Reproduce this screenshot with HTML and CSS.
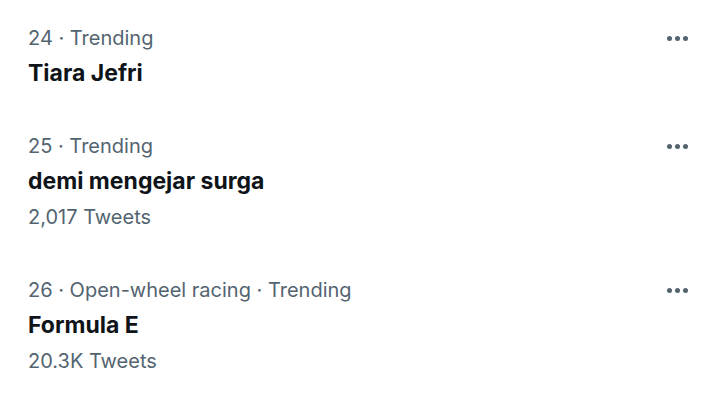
FILE: index.html
```html
<!DOCTYPE html>
<html>
<head>
<meta charset="utf-8">
<link rel="stylesheet" href="styles.css">
</head>
<body>
<div class="list">
  <div class="trend">
    <div class="body">
      <div class="meta">24 · Trending</div>
      <div class="title">Tiara Jefri</div>
    </div>
    <div class="more"><span></span><span></span><span></span></div>
  </div>
  <div class="trend">
    <div class="body">
      <div class="meta">25 · Trending</div>
      <div class="title">demi mengejar surga</div>
      <div class="count">2,017 Tweets</div>
    </div>
    <div class="more"><span></span><span></span><span></span></div>
  </div>
  <div class="trend">
    <div class="body">
      <div class="meta">26 · Open-wheel racing · Trending</div>
      <div class="title">Formula E</div>
      <div class="count">20.3K Tweets</div>
    </div>
    <div class="more"><span></span><span></span><span></span></div>
  </div>
</div>
</body>
</html>
```
FILE: styles.css
```css
html, body {
  margin: 0;
  padding: 0;
  background: #ffffff;
}
body {
  font-family: Inter, "Noto Sans", sans-serif;
  width: 720px;
  height: 405px;
  overflow: hidden;
}
.list {
  display: flex;
  flex-direction: column;
  gap: 38px;
  padding: 21px 32px 0 28px;
}
.trend {
  display: flex;
  justify-content: space-between;
  align-items: flex-start;
}
.body {
  display: flex;
  flex-direction: column;
}
.meta, .count {
  font-size: 20px;
  line-height: 35px;
  color: #536471;
}
.count {
  padding-top: 1px;
}
.title {
  font-size: 23px;
  line-height: 35px;
  font-weight: 700;
  color: #0f1419;
}
.more {
  display: flex;
  gap: 3px;
  height: 35px;
  align-items: center;
  padding-right: 0;
}
.more span {
  width: 5px;
  height: 5px;
  border-radius: 50%;
  background: #536471;
}
```
